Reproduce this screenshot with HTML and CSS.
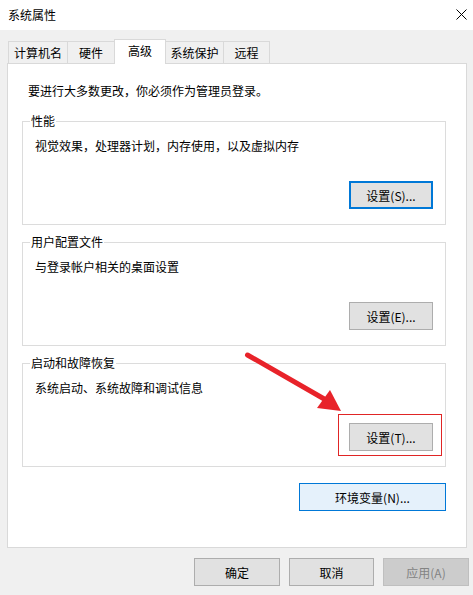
FILE: index.html
```html
<!DOCTYPE html>
<html>
<head lang="zh">
	<meta charset="utf-8">
	<title>系统属性</title>
	<link rel="stylesheet" href="styles.css">
</head>
<body>

	<div class="titlebar">
		<span class="title">系统属性</span>
		<svg class="close" width="11" height="11" viewBox="0 0 11 11">
			<path d="M0.5 0.5 L10.5 10.5 M10.5 0.5 L0.5 10.5" stroke="#000" stroke-width="1" fill="none"/>
		</svg>
	</div>

	<div class="tabs">
		<div class="tab t1">计算机名</div>
		<div class="tab t2">硬件</div>
		<div class="tab active">高级</div>
		<div class="tab t4">系统保护</div>
		<div class="tab t5">远程</div>
	</div>

	<section class="panel">
		<p class="intro">要进行大多数更改，你必须作为管理员登录。</p>

		<fieldset class="group first">
			<legend>性能</legend>
			<p>视觉效果，处理器计划，内存使用，以及虚拟内存</p>
			<div class="row"><button class="btn focus">设置(S)...</button></div>
		</fieldset>

		<fieldset class="group">
			<legend>用户配置文件</legend>
			<p>与登录帐户相关的桌面设置</p>
			<div class="row"><button class="btn">设置(E)...</button></div>
		</fieldset>

		<fieldset class="group">
			<legend>启动和故障恢复</legend>
			<p>系统启动、系统故障和调试信息</p>
			<div class="row"><button class="btn">设置(T)...</button></div>
		</fieldset>

		<div class="row env-row"><button class="btn env">环境变量(N)...</button></div>
	</section>

	<div class="footer">
		<button class="btn">确定</button>
		<button class="btn">取消</button>
		<button class="btn disabled">应用(A)</button>
	</div>

	<!-- annotation: red arrow + highlight box -->
	<svg class="annot" width="473" height="595" viewBox="0 0 473 595">
		<line x1="247.5" y1="355" x2="326" y2="400" stroke="#e8232a" stroke-width="5" stroke-linecap="round"/>
		<polygon points="341,411 317,408 330,390" fill="#e8232a"/>
		<rect x="338.5" y="414.5" width="103" height="41" fill="none" stroke="#e02525" stroke-width="1"/>
	</svg>

</body>
</html>
```

FILE: styles.css
```css
* {
	margin: 0;
	padding: 0;
	box-sizing: border-box;
}

body {
	background: #f0f0f0;
	font-family: "Noto Sans CJK SC", "Microsoft YaHei", sans-serif;
	font-size: 12px;
	line-height: 16px;
	color: #000;
	width: 473px;
	height: 595px;
	position: relative;
	overflow: hidden;
}

.titlebar {
	height: 30px;
	background: #fff;
	display: flex;
	align-items: center;
	justify-content: space-between;
	padding: 0 6px 0 8px;
}

.close {
	margin-top: -1px;
}

/* tab strip */
.tabs {
	display: flex;
	align-items: flex-end;
	height: 24px;
	margin-top: 9px;
	padding-left: 8px;
}

.tab {
	height: 22px;
	line-height: 21px;
	text-align: center;
	border: 1px solid #d9d9d9;
	border-bottom: none;
	background: #f0f0f0;
	margin-left: -1px;
}

.t1 { width: 60px; margin-left: 0; }
.t2 { width: 48px; }
.t4 { width: 59px; }
.t5 { width: 47px; }

.tab.active {
	width: 52px;
	height: 25px;
	line-height: 22px;
	background: #fff;
	margin-bottom: -1px;
	position: relative;
	z-index: 1;
}

/* main page */
.panel {
	margin: 0 6px 0 7px;
	height: 485px;
	background: #fff;
	border: 1px solid #d9d9d9;
	padding-top: 19px;
}

.intro {
	padding-left: 20px;
}

.group {
	margin: 9px 20px 0 14px;
	border: 1px solid #dcdcdc;
	padding: 0;
}

.group.first {
	margin-top: 14px;
}

.group legend {
	margin-left: 7px;
	padding: 0 1px;
	line-height: 16px;
}

.group p {
	margin: 9px 0 0 12px;
}

.row {
	display: flex;
	justify-content: flex-end;
}

.group .row {
	margin: 27px 12px 15px 0;
}

.btn {
	font-family: inherit;
	font-size: 12px;
	color: #000;
	width: 84px;
	height: 28px;
	background: #e1e1e1;
	border: 1px solid #adadad;
	border-radius: 0;
}

.btn.focus {
	border: 2px solid #0078d7;
}

.env-row {
	margin: 16px 20px 0 0;
}

.btn.env {
	width: 147px;
	background: #e5f1fb;
	border-color: #0078d7;
}

.footer {
	display: flex;
	justify-content: flex-end;
	gap: 9px;
	margin: 10px 4px 0 0;
}

.footer .btn {
	width: 86px;
}

.footer .btn:nth-child(2) {
	width: 85px;
}

.btn.disabled {
	background: #cccccc;
	border-color: #bfbfbf;
	color: #838383;
}

/* annotation layer over the dialog */
.annot {
	position: absolute;
	top: 0;
	left: 0;
	pointer-events: none;
}
```
